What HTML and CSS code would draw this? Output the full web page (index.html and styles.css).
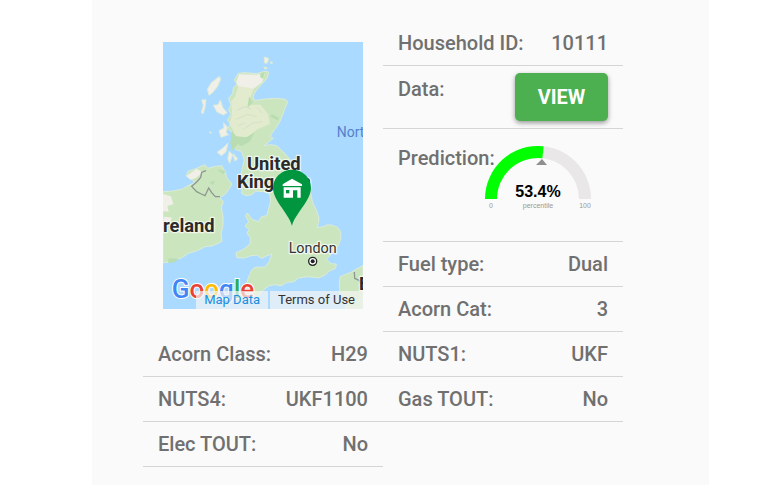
FILE: index.html
```html
<!DOCTYPE html>
<html lang="en">
<head>
<meta charset="utf-8">
<meta name="viewport" content="width=device-width, initial-scale=1">
<title>Household</title>
<link rel="stylesheet" href="styles.css">
</head>
<body>
<main class="panel">
  <div class="details">
    <div class="map-cell">
      <div class="map">
        <svg class="map-canvas" viewBox="0 0 600 801" role="img" aria-label="Map of the United Kingdom">
          <rect width="600" height="801" fill="#aadaff"/>
          <g stroke="#dcebd8" stroke-width="3" stroke-linejoin="round">
            <path fill="#cbe6be" d="M226 94 L246 92 L280 95 L306 88 L317 90 L313 108 L296 127 L276 150 L270 165 L276 176 L296 172 L336 169 L368 172 L374 180 L366 199 L358 221 L351 238 L338 259 L326 275 L321 284 L331 289 L316 301 L302 311 L322 308 L341 311 L361 330 L380 350 L394 378 L417 402 L442 430 L443 454 L449 482 L459 502 L468 528 L466 545 L462 556 L478 555 L492 549 L506 549 L524 556 L533 569 L533 592 L525 612 L513 622 L502 639 L490 652 L504 665 L520 666 L518 679 L499 687 L487 699 L466 708 L437 704 L406 708 L393 719 L373 721 L354 731 L336 728 L318 731 L300 745 L284 766 L264 755 L232 770 L216 774 L230 756 L246 741 L254 712 L266 684 L276 676 L306 675 L318 660 L327 636 L310 642 L296 649 L282 639 L260 642 L244 648 L222 647 L219 632 L240 623 L261 606 L263 588 L252 574 L258 562 L246 552 L257 540 L248 521 L253 513 L267 532 L286 539 L295 525 L312 520 L316 503 L323 477 L319 453 L300 449 L278 447 L266 458 L249 461 L236 454 L238 438 L226 425 L233 402 L238 377 L244 354 L235 328 L220 324 L206 304 L213 289 L207 270 L194 260 L203 246 L193 234 L204 217 L197 203 L204 188 L197 169 L209 155 L211 137 L222 126 L214 114 Z"/>
            <path fill="#cbe6be" d="M70 402 L75 388 L101 379 L126 368 L134 379 L154 374 L176 371 L187 390 L191 407 L207 426 L199 440 L185 458 L170 466 L181 479 L175 496 L180 525 L180 550 L174 576 L177 598 L150 611 L126 614 L103 626 L76 634 L54 649 L30 652 L16 661 L0 662 L0 449 L30 447 L58 441 L78 430 L96 421 L82 408 Z"/>
            <path fill="#cbe6be" d="M600 671 L580 681 L566 690 L531 704 L529 733 L531 755 L550 770 L548 801 L600 801 Z"/>
            <path fill="#f0efe8" d="M169 103 L173 112 L164 133 L150 151 L138 160 L133 142 L145 122 Z M116 174 L129 173 L127 193 L120 216 L115 211 L121 190 Z M151 190 L165 188 L172 174 L179 196 L192 212 L181 219 L162 210 Z M168 266 L183 258 L181 242 L193 255 L190 272 L197 278 L174 286 Z M162 331 L180 318 L195 303 L189 329 L176 341 Z M199 327 L209 339 L200 364 L194 350 Z M211 335 L224 351 L215 357 Z M304 45 L317 49 L313 63 L304 63 Z M322 59 L330 62 L324 65 Z M303 75 L313 78 L306 82 Z M140 269 L147 272 L141 273 Z"/>
          </g>
          <path fill="#f0efe8" d="M228 97 L280 98 L306 94 L298 121 L270 142 L226 137 L220 119 Z"/>
          <path fill="#e3ebcf" d="M226 132 L273 140 L265 158 L257 189 L292 188 L315 216 L321 246 L283 262 L257 282 L240 289 L215 285 L210 263 L199 246 L207 218 L205 178 L216 164 Z"/>
          <path fill="#b9dcb1" d="M207 267 L220 283 L250 286 L274 272 L260 299 L235 312 L224 306 L208 326 L202 303 Z M293 93 L306 91 L300 111 L291 104 Z M258 163 L269 181 L253 198 Z M326 216 L348 227 L344 235 L322 224 Z"/>
          <path fill="none" stroke="#d5e0c6" stroke-width="3" d="M222 205 l24 -12 l18 9 M220 232 l33 -15 l28 7 M242 262 l26 -19 l30 -4 M226 251 l19 -8 M281 196 l16 17"/>
          <path fill="#f0efe8" d="M70 402 L101 380 L120 391 L98 409 L82 413 Z M0 456 L24 463 L31 487 L13 492 L17 509 L0 508 Z M4 524 L28 527 L17 544 L0 533 Z"/>
          <path fill="#b9dcb1" d="M16 650 L44 649 L39 660 L16 663 Z M160 382 L187 387 L181 397 Z M139 421 L155 416 L150 430 Z"/>
          <path fill="none" stroke="#8e9690" stroke-width="4" d="M129 386 L116 391 L113 406 L101 420 L86 433 L101 449 L115 456 L126 461 L137 438 L146 452 L157 464 L171 464 M574 690 L575 709 L588 715 L598 730"/>
          <g class="place place-country">
            <text x="252" y="384">United</text>
            <text x="222" y="438">Kingdom</text>
            <text x="0" y="570">reland</text>
            <text x="588" y="744">E</text>
          </g>
          <text class="place place-sea" x="521" y="285">North</text>
          <text class="place place-city" x="377" y="632">London</text>
          <circle cx="449" cy="658" r="12" fill="#fff" stroke="#222" stroke-width="4"/>
          <circle cx="449" cy="658" r="6" fill="#222"/>
          <path fill="#009640" d="M387 552 C381 520 330 475 330 438 A57 55 0 0 1 444 438 C444 475 393 520 387 552 Z"/>
          <path fill="#fff" d="M387 410 L417 427 V432 H359 V427 Z M362 436 H413 V467 H403 V445 H390 V467 H362 Z"/>
          <path fill="#009640" d="M369 444 H379 V454 H369 Z"/>
          <text class="brand" x="26" y="767"><tspan fill="#4285f4">G</tspan><tspan fill="#ea4335">o</tspan><tspan fill="#fbbc05">o</tspan><tspan fill="#4285f4">g</tspan><tspan fill="#34a853">l</tspan><tspan fill="#ea4335">e</tspan></text>
        </svg>
        <div class="map-links">
          <a class="map-data" href="#data">Map Data</a>
          <a class="map-terms" href="#terms">Terms of Use</a>
        </div>
      </div>
    </div>
    <div class="row"><span>Household ID:</span><span>10111</span></div>
    <div class="row row-action"><span>Data:</span><button class="view" type="button">VIEW</button></div>
    <div class="row row-gauge">
      <span>Prediction:</span>
      <svg class="gauge" viewBox="0 0 106 66" role="img" aria-label="53.4 percentile">
        <path fill="#e9e7e8" d="M0 53 A53 53 0 0 1 106 53 H94 A41 41 0 0 0 12 53 Z"/>
        <path fill="#0f0" d="M0 53 A53 53 0 0 1 58.6 0.3 L57.4 12.2 A41 41 0 0 0 12 53 Z"/>
        <path fill="#8f8f8f" d="M57 13 L62 19 H51 Z"/>
        <text class="gauge-value" x="53" y="51">53.4%</text>
        <text class="gauge-note" x="6" y="62">0</text>
        <text class="gauge-note" x="53" y="62">percentile</text>
        <text class="gauge-note" x="100" y="62">100</text>
      </svg>
    </div>
    <div class="row"><span>Fuel type:</span><span>Dual</span></div>
    <div class="row"><span>Acorn Cat:</span><span>3</span></div>
    <div class="row"><span>Acorn Class:</span><span>H29</span></div>
    <div class="row"><span>NUTS1:</span><span>UKF</span></div>
    <div class="row"><span>NUTS4:</span><span>UKF1100</span></div>
    <div class="row"><span>Gas TOUT:</span><span>No</span></div>
    <div class="row"><span>Elec TOUT:</span><span>No</span></div>
  </div>
</main>
</body>
</html>
```
FILE: styles.css
```css
* {
  box-sizing: border-box;
}

body {
  margin: 0;
  background: #fff;
  color: #707070;
  font-family: Roboto, "Liberation Sans", sans-serif;
  font-size: 20px;
  font-weight: 500;
  line-height: 24px;
}

.panel {
  min-height: 100vh;
  margin: 0 51px 0 92px;
  padding: 21px 86px 18px 51px;
  background: #fafafa;
}

.details {
  display: grid;
  grid-template-columns: 1fr 1fr;
}

.map-cell {
  grid-row: span 5;
  padding: 21px 20px;
}

.map {
  position: relative;
  overflow: hidden;
  font-weight: 400;
}

.map-canvas {
  display: block;
  width: 100%;
}

.place {
  paint-order: stroke;
  stroke: #fff;
  stroke-opacity: 0.7;
  stroke-width: 8px;
  stroke-linejoin: round;
}

.place-country {
  fill: #2b2b2b;
  font-size: 55px;
  font-weight: 700;
}

.place-sea {
  fill: #5580cc;
  stroke: none;
  font-size: 42px;
}

.place-city {
  fill: #333;
  font-size: 43px;
}

.brand {
  font-size: 78px;
  font-weight: 500;
  paint-order: stroke;
  stroke: #fff;
  stroke-width: 6px;
}

.map-links {
  position: absolute;
  right: 0;
  bottom: 0;
  display: flex;
  gap: 2px;
  font-size: 13px;
  line-height: 18px;
}

.map-links a {
  padding: 0 8px;
  background: rgba(245, 245, 245, 0.7);
  text-decoration: none;
  white-space: nowrap;
}

.map-data {
  color: #1a8ee0;
}

.map-terms {
  color: #333;
}

.row {
  display: flex;
  justify-content: space-between;
  align-items: flex-start;
  min-height: 45px;
  padding: 10px 15px;
  border-bottom: 1px solid #d5d5d5;
}

.row-action {
  padding: 7px 15px;
}

.row-action span {
  padding-top: 4px;
}

.view {
  width: 93px;
  height: 48px;
  padding: 0;
  border: 0;
  border-radius: 5px;
  background: #4caf50;
  box-shadow: 0 2px 5px rgba(0, 0, 0, 0.4);
  color: #fff;
  font: 700 20px Roboto, "Liberation Sans", sans-serif;
}

.row-gauge {
  height: 113px;
  padding: 17px 32px 10px 15px;
}

.gauge {
  flex: none;
  width: 106px;
  height: 66px;
  margin-left: -24px;
}

.gauge text {
  font-family: "Liberation Sans", Arial, sans-serif;
  text-anchor: middle;
}

.gauge-value {
  fill: #000;
  font-size: 16px;
  font-weight: 700;
}

.gauge-note {
  fill: #999;
  font-size: 7px;
  font-weight: 400;
}
```
